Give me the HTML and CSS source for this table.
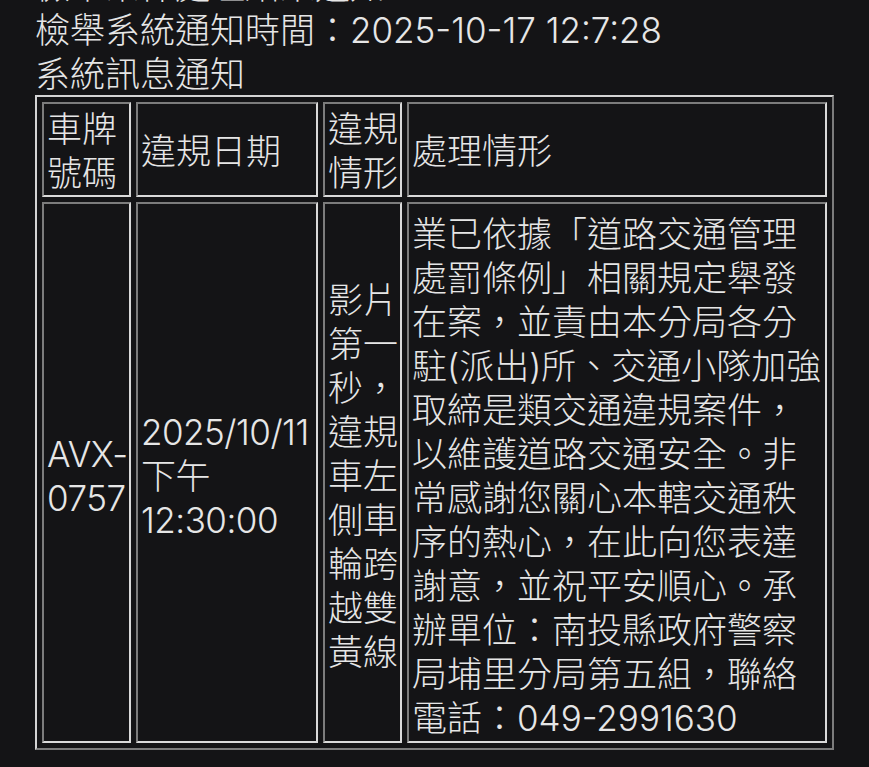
FILE: index.html
```html
<!DOCTYPE html>
<html lang="zh-Hant">
<head>
<meta charset="utf-8">
<title>系統訊息通知</title>
<link rel="stylesheet" href="styles.css">
</head>
<body>
<div class="page">
  <p class="line cut">檢舉案件處理結果通知</p>
  <p class="line">檢舉系統通知時間：2025-10-17 12:7:28</p>
  <p class="line">系統訊息通知</p>
  <table class="report">
    <tr class="head">
      <td class="c1">車牌號碼</td>
      <td class="c2">違規日期</td>
      <td class="c3">違規情形</td>
      <td class="c4">處理情形</td>
    </tr>
    <tr class="body">
      <td class="plate">AVX-<br>0757</td>
      <td class="date">2025/10/11<br>下午<br>12:30:00</td>
      <td>影片第一秒，違規車左側車輪跨越雙黃線</td>
      <td>業已依據「道路交通管理處罰條例」相關規定舉發在案，並責由本分局各分駐(派出)所、交通小隊加強取締是類交通違規案件，以維護道路交通安全。非常感謝您關心本轄交通秩序的熱心，在此向您表達謝意，並祝平安順心。承辦單位：南投縣政府警察局埔里分局第五組，聯絡電話：049-2991630</td>
    </tr>
  </table>
</div>
</body>
</html>
```

FILE: styles.css
```css
html, body {
  margin: 0;
  padding: 0;
  background: #141416;
}

body {
  color: #e6e6e6;
  font-family: Inter, "Noto Sans CJK TC", "Noto Sans", sans-serif;
  font-size: 35px;
  font-weight: 300;
  line-height: 44px;
  overflow: hidden;
}

.page {
  padding-left: 35px;
}

.line {
  margin: 0;
  white-space: nowrap;
}

.cut {
  margin-top: -36px;
}

.report {
  margin-top: -1px;
  table-layout: fixed;
  width: 799px;
  border-collapse: separate;
  border-spacing: 5px;
  border-style: solid;
  border-width: 2px;
  border-color: #d4d4d4 #7c7c7c #7c7c7c #d4d4d4;
}

.report td {
  box-sizing: border-box;
  vertical-align: middle;
  text-align: left;
  padding: 3px 1px 0 3px;
  border-style: solid;
  border-width: 2px;
  border-color: #7c7c7c #dadada #dadada #7c7c7c;
}

.report .c1 { width: 89px; }
.report .c2 { width: 182px; }
.report .c3 { width: 79px; }
.report .c4 { width: 420px; }

.report .body td {
  padding-top: 8px;
  padding-bottom: 1px;
}

.report .plate,
.report .date {
  letter-spacing: -0.5px;
}
```
